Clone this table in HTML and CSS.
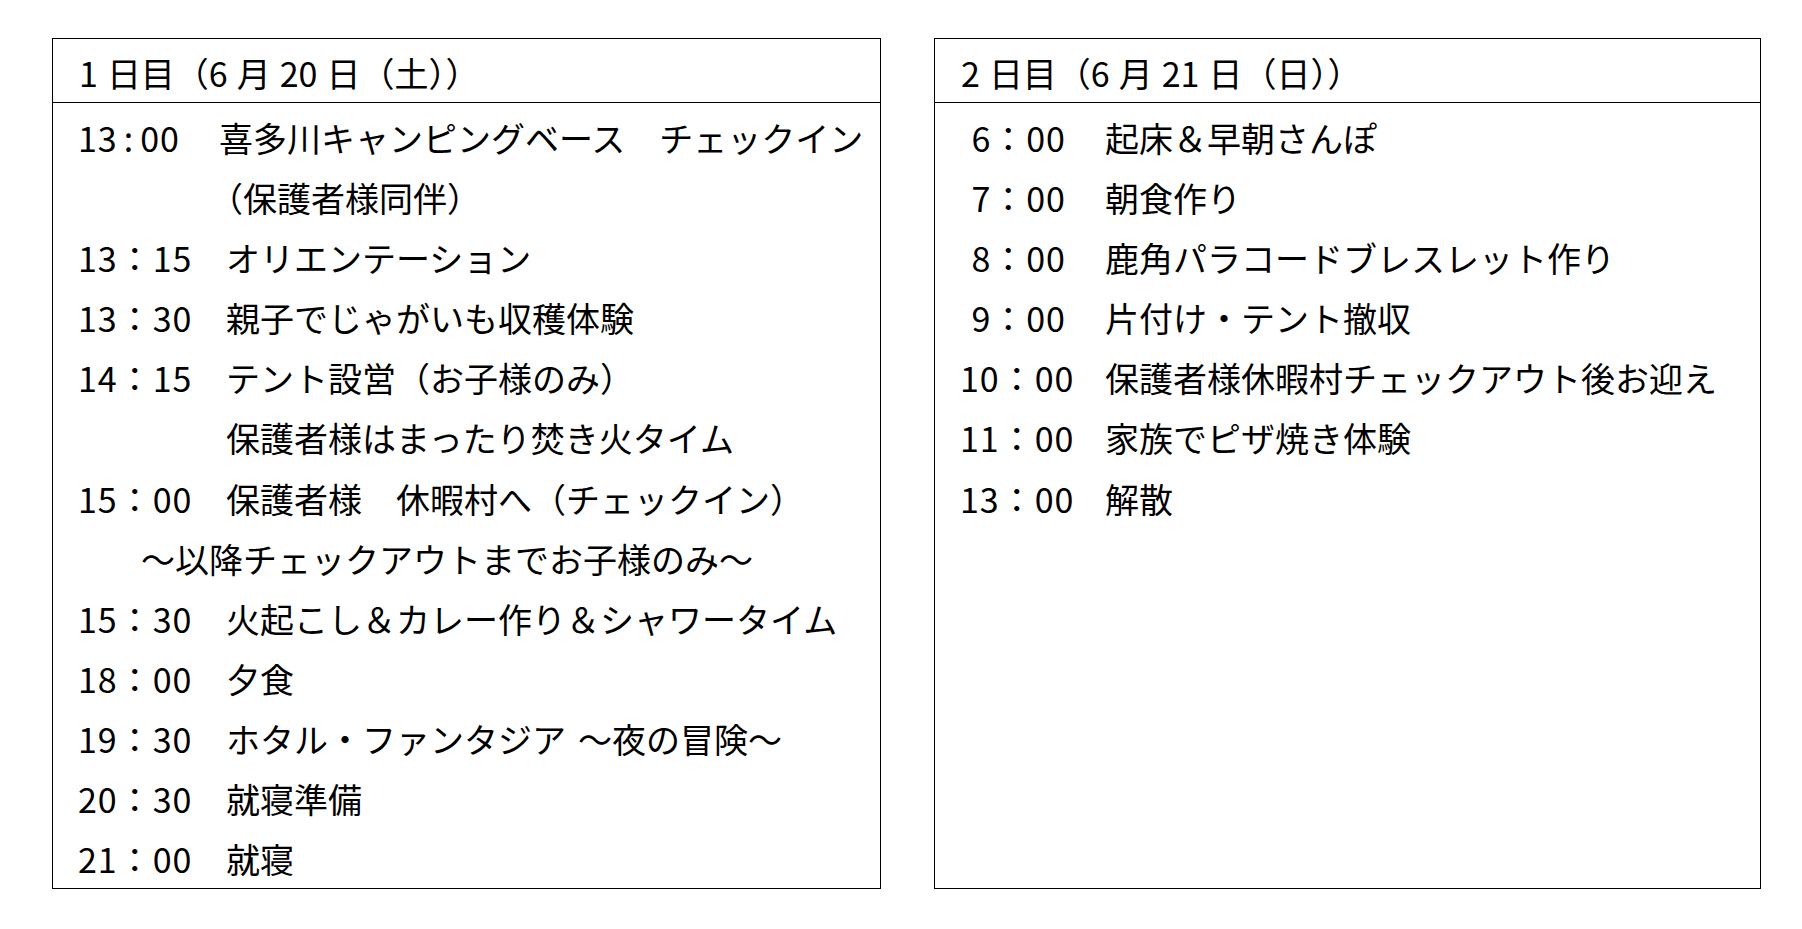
FILE: index.html
```html
<!DOCTYPE html>
<html lang="ja">
<head>
<meta charset="utf-8">
<title>スケジュール</title>
<link rel="stylesheet" href="styles.css">
</head>
<body>
<main class="page">
  <section class="day day--first">
    <h2 class="day-head">1<span class="gap"></span>日目（6<span class="gap"></span>月<span class="gap"></span>20<span class="gap"></span>日（土））</h2>
    <div class="day-body">
      <div class="row row--tight"><span class="time">13<span class="colon">:</span>00</span><span class="act">喜多川キャンピングベース　チェックイン</span></div>
      <div class="row row--cont"><span class="time"></span><span class="act act--paren">（保護者様同伴）</span></div>
      <div class="row"><span class="time">13：15</span><span class="act">オリエンテーション</span></div>
      <div class="row"><span class="time">13：30</span><span class="act">親子でじゃがいも収穫体験</span></div>
      <div class="row"><span class="time">14：15</span><span class="act">テント設営（お子様のみ）</span></div>
      <div class="row row--cont"><span class="time"></span><span class="act">保護者様はまったり焚き火タイム</span></div>
      <div class="row"><span class="time">15：00</span><span class="act">保護者様　休暇村へ（チェックイン）</span></div>
      <div class="note">～以降チェックアウトまでお子様のみ～</div>
      <div class="row"><span class="time">15：30</span><span class="act">火起こし＆カレー作り＆シャワータイム</span></div>
      <div class="row"><span class="time">18：00</span><span class="act">夕食</span></div>
      <div class="row"><span class="time">19：30</span><span class="act">ホタル・ファンタジア<span class="sp"></span>～夜の冒険～</span></div>
      <div class="row"><span class="time">20：30</span><span class="act">就寝準備</span></div>
      <div class="row"><span class="time">21：00</span><span class="act">就寝</span></div>
    </div>
  </section>
  <section class="day day--second">
    <h2 class="day-head">2<span class="gap"></span>日目（6<span class="gap"></span>月<span class="gap"></span>21<span class="gap"></span>日（日））</h2>
    <div class="day-body">
      <div class="row"><span class="time">6：00</span><span class="act">起床＆早朝さんぽ</span></div>
      <div class="row"><span class="time">7：00</span><span class="act">朝食作り</span></div>
      <div class="row"><span class="time">8：00</span><span class="act">鹿角パラコードブレスレット作り</span></div>
      <div class="row"><span class="time">9：00</span><span class="act">片付け・テント撤収</span></div>
      <div class="row"><span class="time">10：00</span><span class="act">保護者様休暇村チェックアウト後お迎え</span></div>
      <div class="row"><span class="time">11：00</span><span class="act">家族でピザ焼き体験</span></div>
      <div class="row"><span class="time">13：00</span><span class="act">解散</span></div>
    </div>
  </section>
</main>
</body>
</html>
```
FILE: styles.css
```css
html, body {
  margin: 0;
  padding: 0;
  background: #ffffff;
}

body {
  font-family: "Noto Sans CJK JP", "Noto Sans", sans-serif;
  color: #000000;
  font-size: 34px;
}

.page {
  display: flex;
  gap: 53px;
  padding: 38px 0 0 52px;
}

.day {
  box-sizing: border-box;
  width: 829px;
  height: 851px;
  border: 1px solid #000;
  display: flex;
  flex-direction: column;
}

.day--second {
  width: 827px;
}

.day-head {
  margin: 0;
  box-sizing: border-box;
  height: 64px;
  padding: 4px 0 0 26px;
  font-size: 34px;
  font-weight: 400;
  line-height: 59px;
  border-bottom: 1px solid #000;
  white-space: nowrap;
}

.gap {
  display: inline-block;
  width: 9px;
}

.day-body {
  padding-top: 5px;
}

.row {
  display: grid;
  grid-template-columns: 148px 1fr;
  padding-left: 25px;
  line-height: 60.1px;
  height: 60.1px;
  white-space: nowrap;
}

.time {
  letter-spacing: 1px;
}

.colon {
  padding: 0 6px;
}

.row--tight {
  grid-template-columns: 141px 1fr;
}

.act--paren {
  margin-left: -17px;
}

.sp {
  display: inline-block;
  width: 12px;
}

.day--second .row {
  grid-template-columns: 145px 1fr;
}

.day--second .time {
  text-align: right;
  width: 106px;
}

.note {
  padding-left: 88px;
  line-height: 60.1px;
  height: 60.1px;
  white-space: nowrap;
}
```
